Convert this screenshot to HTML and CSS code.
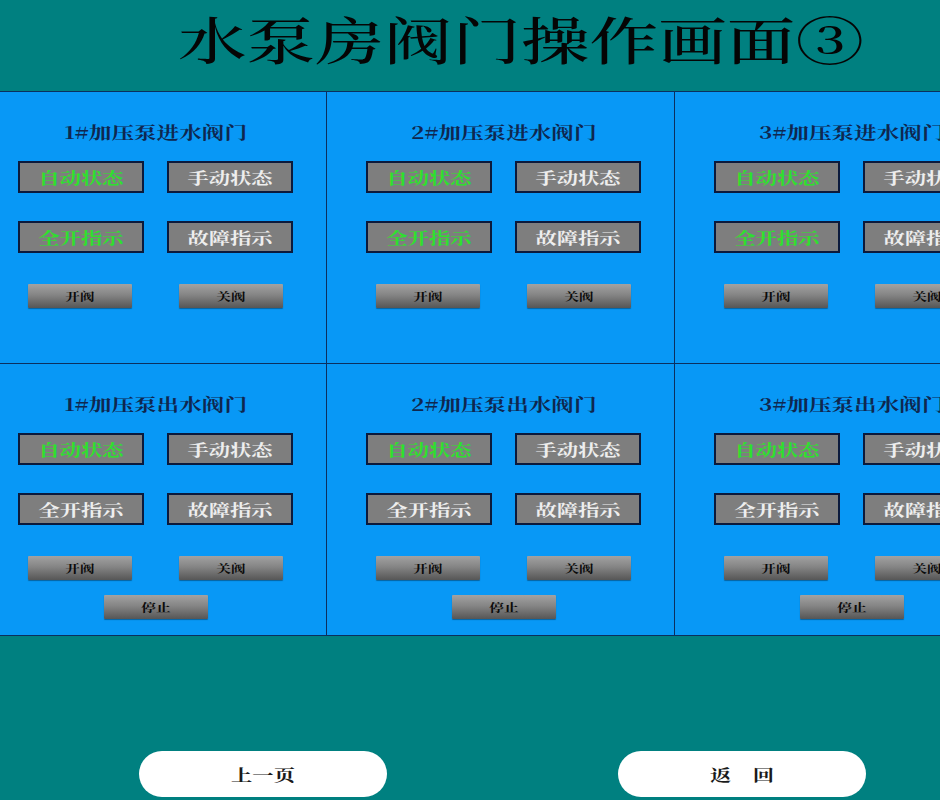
FILE: index.html
```html
<!DOCTYPE html>
<html lang="zh-CN">
<head>
<meta charset="utf-8">
<title>水泵房阀门操作画面③</title>
<link rel="stylesheet" href="styles.css">
</head>
<body>
<div class="screen">
  <header class="header">
    <h1 class="title"><span class="wide big">水泵房阀门操作画面③</span></h1>
  </header>

  <main class="grid">
    <section class="panel">
      <h2 class="ptitle"><span class="wide">1#加压泵进水阀门</span></h2>
      <div class="inds">
        <div class="ind on"><span class="wide">自动状态</span></div>
        <div class="ind"><span class="wide">手动状态</span></div>
        <div class="ind on"><span class="wide">全开指示</span></div>
        <div class="ind"><span class="wide">故障指示</span></div>
      </div>
      <div class="btns">
        <button class="btn"><span class="wide">开阀</span></button>
        <button class="btn"><span class="wide">关阀</span></button>
      </div>
    </section>
    <section class="panel">
      <h2 class="ptitle"><span class="wide">2#加压泵进水阀门</span></h2>
      <div class="inds">
        <div class="ind on"><span class="wide">自动状态</span></div>
        <div class="ind"><span class="wide">手动状态</span></div>
        <div class="ind on"><span class="wide">全开指示</span></div>
        <div class="ind"><span class="wide">故障指示</span></div>
      </div>
      <div class="btns">
        <button class="btn"><span class="wide">开阀</span></button>
        <button class="btn"><span class="wide">关阀</span></button>
      </div>
    </section>
    <section class="panel">
      <h2 class="ptitle"><span class="wide">3#加压泵进水阀门</span></h2>
      <div class="inds">
        <div class="ind on"><span class="wide">自动状态</span></div>
        <div class="ind"><span class="wide">手动状态</span></div>
        <div class="ind on"><span class="wide">全开指示</span></div>
        <div class="ind"><span class="wide">故障指示</span></div>
      </div>
      <div class="btns">
        <button class="btn"><span class="wide">开阀</span></button>
        <button class="btn"><span class="wide">关阀</span></button>
      </div>
    </section>

    <section class="panel">
      <h2 class="ptitle"><span class="wide">1#加压泵出水阀门</span></h2>
      <div class="inds">
        <div class="ind on"><span class="wide">自动状态</span></div>
        <div class="ind"><span class="wide">手动状态</span></div>
        <div class="ind"><span class="wide">全开指示</span></div>
        <div class="ind"><span class="wide">故障指示</span></div>
      </div>
      <div class="btns">
        <button class="btn"><span class="wide">开阀</span></button>
        <button class="btn"><span class="wide">关阀</span></button>
      </div>
      <div class="btns stoprow">
        <button class="btn"><span class="wide">停止</span></button>
      </div>
    </section>
    <section class="panel">
      <h2 class="ptitle"><span class="wide">2#加压泵出水阀门</span></h2>
      <div class="inds">
        <div class="ind on"><span class="wide">自动状态</span></div>
        <div class="ind"><span class="wide">手动状态</span></div>
        <div class="ind"><span class="wide">全开指示</span></div>
        <div class="ind"><span class="wide">故障指示</span></div>
      </div>
      <div class="btns">
        <button class="btn"><span class="wide">开阀</span></button>
        <button class="btn"><span class="wide">关阀</span></button>
      </div>
      <div class="btns stoprow">
        <button class="btn"><span class="wide">停止</span></button>
      </div>
    </section>
    <section class="panel">
      <h2 class="ptitle"><span class="wide">3#加压泵出水阀门</span></h2>
      <div class="inds">
        <div class="ind on"><span class="wide">自动状态</span></div>
        <div class="ind"><span class="wide">手动状态</span></div>
        <div class="ind"><span class="wide">全开指示</span></div>
        <div class="ind"><span class="wide">故障指示</span></div>
      </div>
      <div class="btns">
        <button class="btn"><span class="wide">开阀</span></button>
        <button class="btn"><span class="wide">关阀</span></button>
      </div>
      <div class="btns stoprow">
        <button class="btn"><span class="wide">停止</span></button>
      </div>
    </section>
  </main>

  <nav class="nav">
    <button class="pill"><span class="wide">上一页</span></button>
    <button class="pill"><span class="wide">返　回</span></button>
  </nav>
</div>
</body>
</html>
```
FILE: styles.css
```css
html, body {
  margin: 0;
  padding: 0;
}
body {
  background: #008080;
  width: 940px;
  height: 800px;
  overflow: hidden;
  font-family: "Noto Serif CJK SC", "Liberation Serif", "Noto Sans CJK SC", serif;
}
.screen {
  width: 940px;
  height: 800px;
  display: flex;
  flex-direction: column;
}
.wide {
  display: inline-block;
  transform: scaleX(1.33);
  white-space: nowrap;
}
.wide.big {
  transform: scaleX(1.345);
}
.header {
  height: 91px;
  box-sizing: border-box;
  display: flex;
  align-items: flex-start;
  justify-content: center;
  padding: 10px 0 0 102px;
}
.title {
  margin: 0;
  font-size: 51px;
  font-weight: 500;
  color: #050505;
  line-height: 56px;
}
.grid {
  display: grid;
  grid-template-columns: repeat(3, 348px);
  grid-template-rows: repeat(2, 272px);
  margin-left: -22px;
  width: 1044px;
}
.panel {
  background: #0898f6;
  border: 1px solid #0b2f5e;
  margin: 0 -1px -1px 0;
  box-sizing: border-box;
  padding: 30px 0 0 39px;
  display: flex;
  flex-direction: column;
  width: 349px;
}
.ptitle {
  margin: 0;
  width: 275px;
  text-align: center;
  font-size: 17px;
  line-height: 20px;
  font-weight: 700;
  color: #0f274f;
}
.inds {
  margin-top: 19px;
  width: 275px;
  display: grid;
  grid-template-columns: 126px 126px;
  column-gap: 23px;
  row-gap: 28px;
}
.ind {
  height: 32px;
  box-sizing: border-box;
  background: #7e7e7e;
  border: 2px solid #0b1a3c;
  display: flex;
  align-items: center;
  justify-content: center;
  font-size: 16px;
  font-weight: 700;
  color: #eeeeee;
}
.ind.on {
  color: #2ee02e;
}
.btns {
  margin-top: 31px;
  width: 275px;
  display: flex;
  justify-content: center;
  gap: 47px;
}
.stoprow {
  margin-top: 15px;
}
.btn {
  width: 104px;
  height: 24px;
  border: none;
  border-radius: 1px;
  padding: 0;
  background: linear-gradient(to bottom, #a2a2a2 0%, #858585 45%, #565656 100%);
  box-shadow: 0 1px 1px rgba(0, 0, 0, 0.35);
  font-family: inherit;
  font-size: 11px;
  font-weight: 700;
  color: #0a0a0a;
}
.nav {
  flex: 1;
  display: flex;
  align-items: flex-start;
  padding: 116px 0 0 139px;
  gap: 231px;
  box-sizing: border-box;
}
.pill {
  width: 248px;
  height: 46px;
  border: none;
  border-radius: 23px;
  background: #ffffff;
  font-family: inherit;
  font-size: 16px;
  font-weight: 700;
  color: #1a1a1a;
  padding: 0;
}
```
